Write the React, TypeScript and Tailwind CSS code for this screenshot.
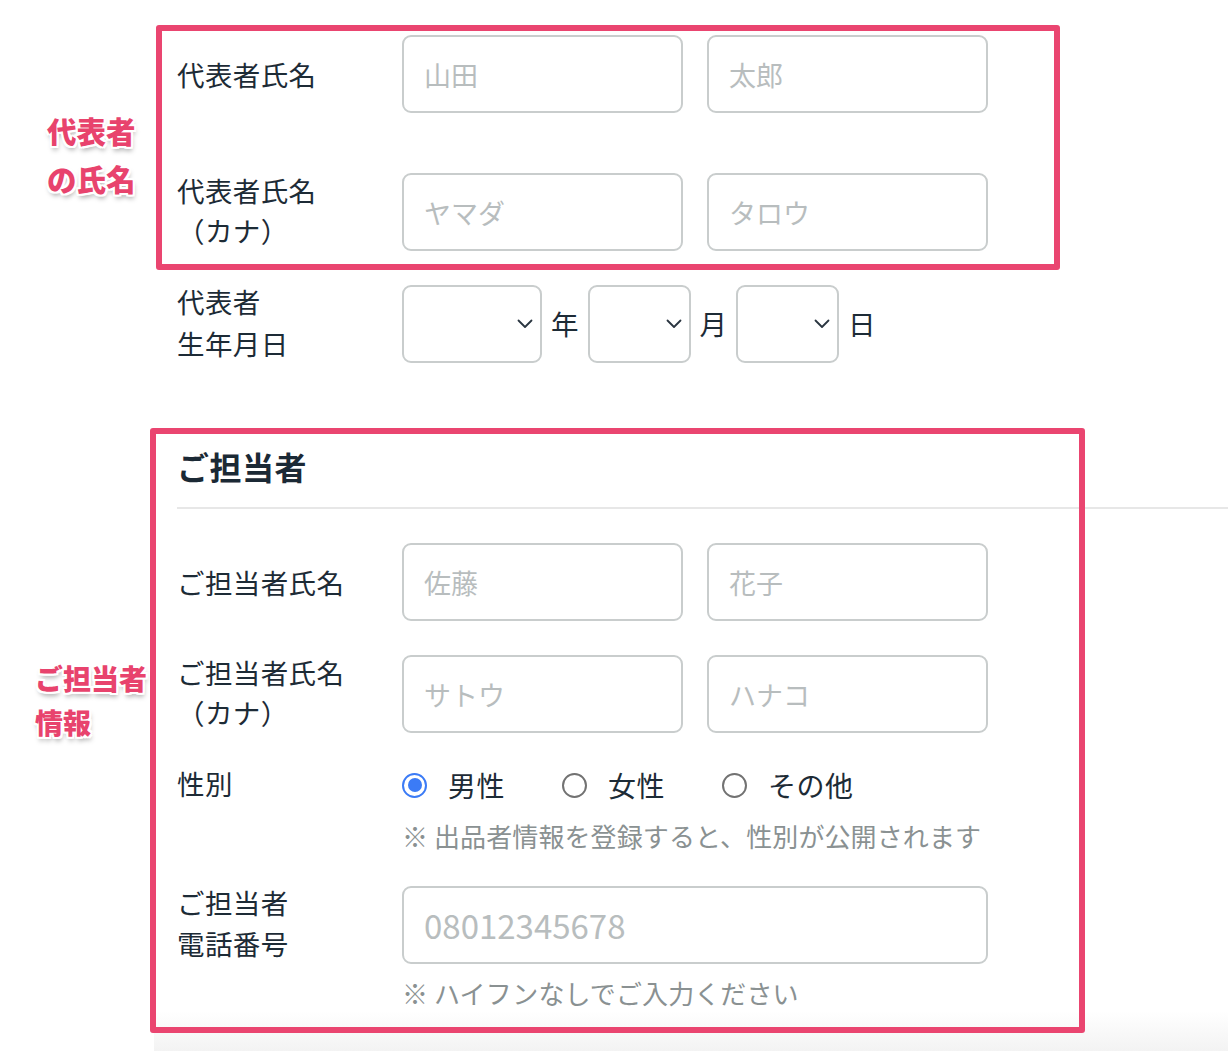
import React from "react";

const inputCls =
  "h-[78px] rounded-[9px] border-2 border-[#c9cdcd] bg-white pl-[20px] text-[27px] text-[#1d2b36] placeholder:text-[#b8bdbe] outline-none font-['Noto_Sans_CJK_JP',sans-serif]";

function Label({ lines, lh = "leading-[40px]" }: { lines: string[]; lh?: string }) {
  const pad = lines.length > 1 ? "pb-[5px]" : "";
  return (
    <div className={`w-[225px] shrink-0 text-[27.5px] ${lh} ${pad} text-[#1d2b36] tracking-[0.4px]`}>
      {lines.map((l) => (
        <div key={l}>{l}</div>
      ))}
    </div>
  );
}

function Chevron() {
  return (
    <svg
      className="pointer-events-none absolute right-[9px] top-1/2 -translate-y-1/2"
      width="16"
      height="10"
      viewBox="0 0 16 10"
      fill="none"
    >
      <path d="M1.5 1.5 L8 8 L14.5 1.5" stroke="#2a3540" strokeWidth="1.8" strokeLinecap="round" strokeLinejoin="round" />
    </svg>
  );
}

function Select({ w }: { w: string }) {
  return (
    <div className={`relative h-[78px] ${w}`}>
      <select className="h-full w-full appearance-none rounded-[9px] border-2 border-[#c9cdcd] bg-white outline-none" />
      <Chevron />
    </div>
  );
}

function Radio({ checked, label }: { checked?: boolean; label: string }) {
  return (
    <div className="flex items-center">
      {checked ? (
        <div className="flex h-[25px] w-[25px] items-center justify-center rounded-full border-[2.5px] border-[#3b7bf6]">
          <div className="h-[14px] w-[14px] rounded-full bg-[#3b7bf6]" />
        </div>
      ) : (
        <div className="h-[25px] w-[25px] rounded-full border-2 border-[#727272]" />
      )}
      <span className="ml-[21px] text-[28px] leading-[40px] text-[#1d2b36] tracking-[0.5px]">{label}</span>
    </div>
  );
}

const annot =
  "absolute font-black text-[#e8436d] [text-shadow:2px_0_0_#fff,-2px_0_0_#fff,0_2px_0_#fff,0_-2px_0_#fff,2px_2px_0_#fff,-2px_-2px_0_#fff,2px_-2px_0_#fff,-2px_2px_0_#fff,1px_4px_5px_rgba(0,0,0,0.35)]";

export default function App() {
  return (
    <div className="relative h-[1052px] w-[1228px] overflow-hidden bg-white font-['Noto_Sans_CJK_JP',sans-serif]">
      <div className="ml-[154px] flex flex-col">
        <div className="flex flex-col pl-[23px] pt-[35px]">
          {/* 代表者氏名 */}
          <div className="flex h-[78px] items-center">
            <Label lines={["代表者氏名"]} />
            <div className="flex gap-[24px]">
              <input className={`${inputCls} w-[281px]`} placeholder="山田" />
              <input className={`${inputCls} w-[281px]`} placeholder="太郎" />
            </div>
          </div>
          {/* カナ */}
          <div className="mt-[60px] flex h-[78px] items-center">
            <Label lines={["代表者氏名", "（カナ）"]} />
            <div className="flex gap-[24px]">
              <input className={`${inputCls} w-[281px]`} placeholder="ヤマダ" />
              <input className={`${inputCls} w-[281px]`} placeholder="タロウ" />
            </div>
          </div>
          {/* 生年月日 */}
          <div className="mt-[34px] flex h-[78px] items-center">
            <Label lines={["代表者", "生年月日"]} lh="leading-[42px]" />
            <div className="flex items-center gap-[9px] text-[27.5px] text-[#1d2b36]">
              <Select w="w-[140px]" />
              <span>年</span>
              <Select w="w-[103px]" />
              <span>月</span>
              <Select w="w-[103px]" />
              <span>日</span>
            </div>
          </div>

          {/* ご担当者 */}
          <h2 className="mt-[83px] h-[40px] text-[32px] font-bold leading-[40px] text-[#1b2935] tracking-[0.5px]">ご担当者</h2>
        </div>
        <div className="ml-[23px] mt-[21px] h-[2px] bg-[#e7e7e7]" />
        <div className="flex flex-col pl-[23px]">
          <div className="mt-[34px] flex h-[78px] items-center">
            <Label lines={["ご担当者氏名"]} />
            <div className="flex gap-[24px]">
              <input className={`${inputCls} w-[281px]`} placeholder="佐藤" />
              <input className={`${inputCls} w-[281px]`} placeholder="花子" />
            </div>
          </div>
          <div className="mt-[34px] flex h-[78px] items-center">
            <Label lines={["ご担当者氏名", "（カナ）"]} />
            <div className="flex gap-[24px]">
              <input className={`${inputCls} w-[281px]`} placeholder="サトウ" />
              <input className={`${inputCls} w-[281px]`} placeholder="ハナコ" />
            </div>
          </div>
          {/* 性別 */}
          <div className="mt-[32px] flex items-start">
            <div className="-mt-[2px]">
              <Label lines={["性別"]} />
            </div>
            <div className="flex flex-col">
              <div className="flex h-[40px] items-center gap-[57px]">
                <Radio checked label="男性" />
                <Radio label="女性" />
                <Radio label="その他" />
              </div>
              <p className="mt-[13px] text-[26px] leading-[36px] text-[#8a9192] tracking-[0.1px]">
                ※ 出品者情報を登録すると、性別が公開されます
              </p>
            </div>
          </div>
          {/* 電話番号 */}
          <div className="mt-[32px] flex h-[78px] items-center">
            <Label lines={["ご担当者", "電話番号"]} lh="leading-[41px]" />
            <input className={`${inputCls} w-[586px] text-[33px]`} placeholder="08012345678" />
          </div>
          <div className="flex">
            <div className="w-[225px] shrink-0" />
            <p className="mt-[11px] text-[26px] leading-[36px] text-[#8a9192] tracking-[0.1px]">※ ハイフンなしでご入力ください</p>
          </div>
        </div>
        <div className="h-[40px] bg-gradient-to-b from-white to-[#f3f3f3]" />
      </div>

      {/* annotation overlays */}
      <div className="pointer-events-none absolute left-[156px] top-[25px] h-[245px] w-[904px] rounded-[3px] border-[6px] border-[#ea4570]" />
      <div className="pointer-events-none absolute left-[150px] top-[428px] h-[605px] w-[935px] rounded-[3px] border-[6px] border-[#ea4570]" />
      <div className={`${annot} left-[47px] top-[106px] text-[29.5px] leading-[48px]`}>
        <div>代表者</div>
        <div>の氏名</div>
      </div>
      <div className={`${annot} left-[35px] top-[656px] text-[28px] leading-[44px]`}>
        <div>ご担当者</div>
        <div>情報</div>
      </div>
    </div>
  );
}
